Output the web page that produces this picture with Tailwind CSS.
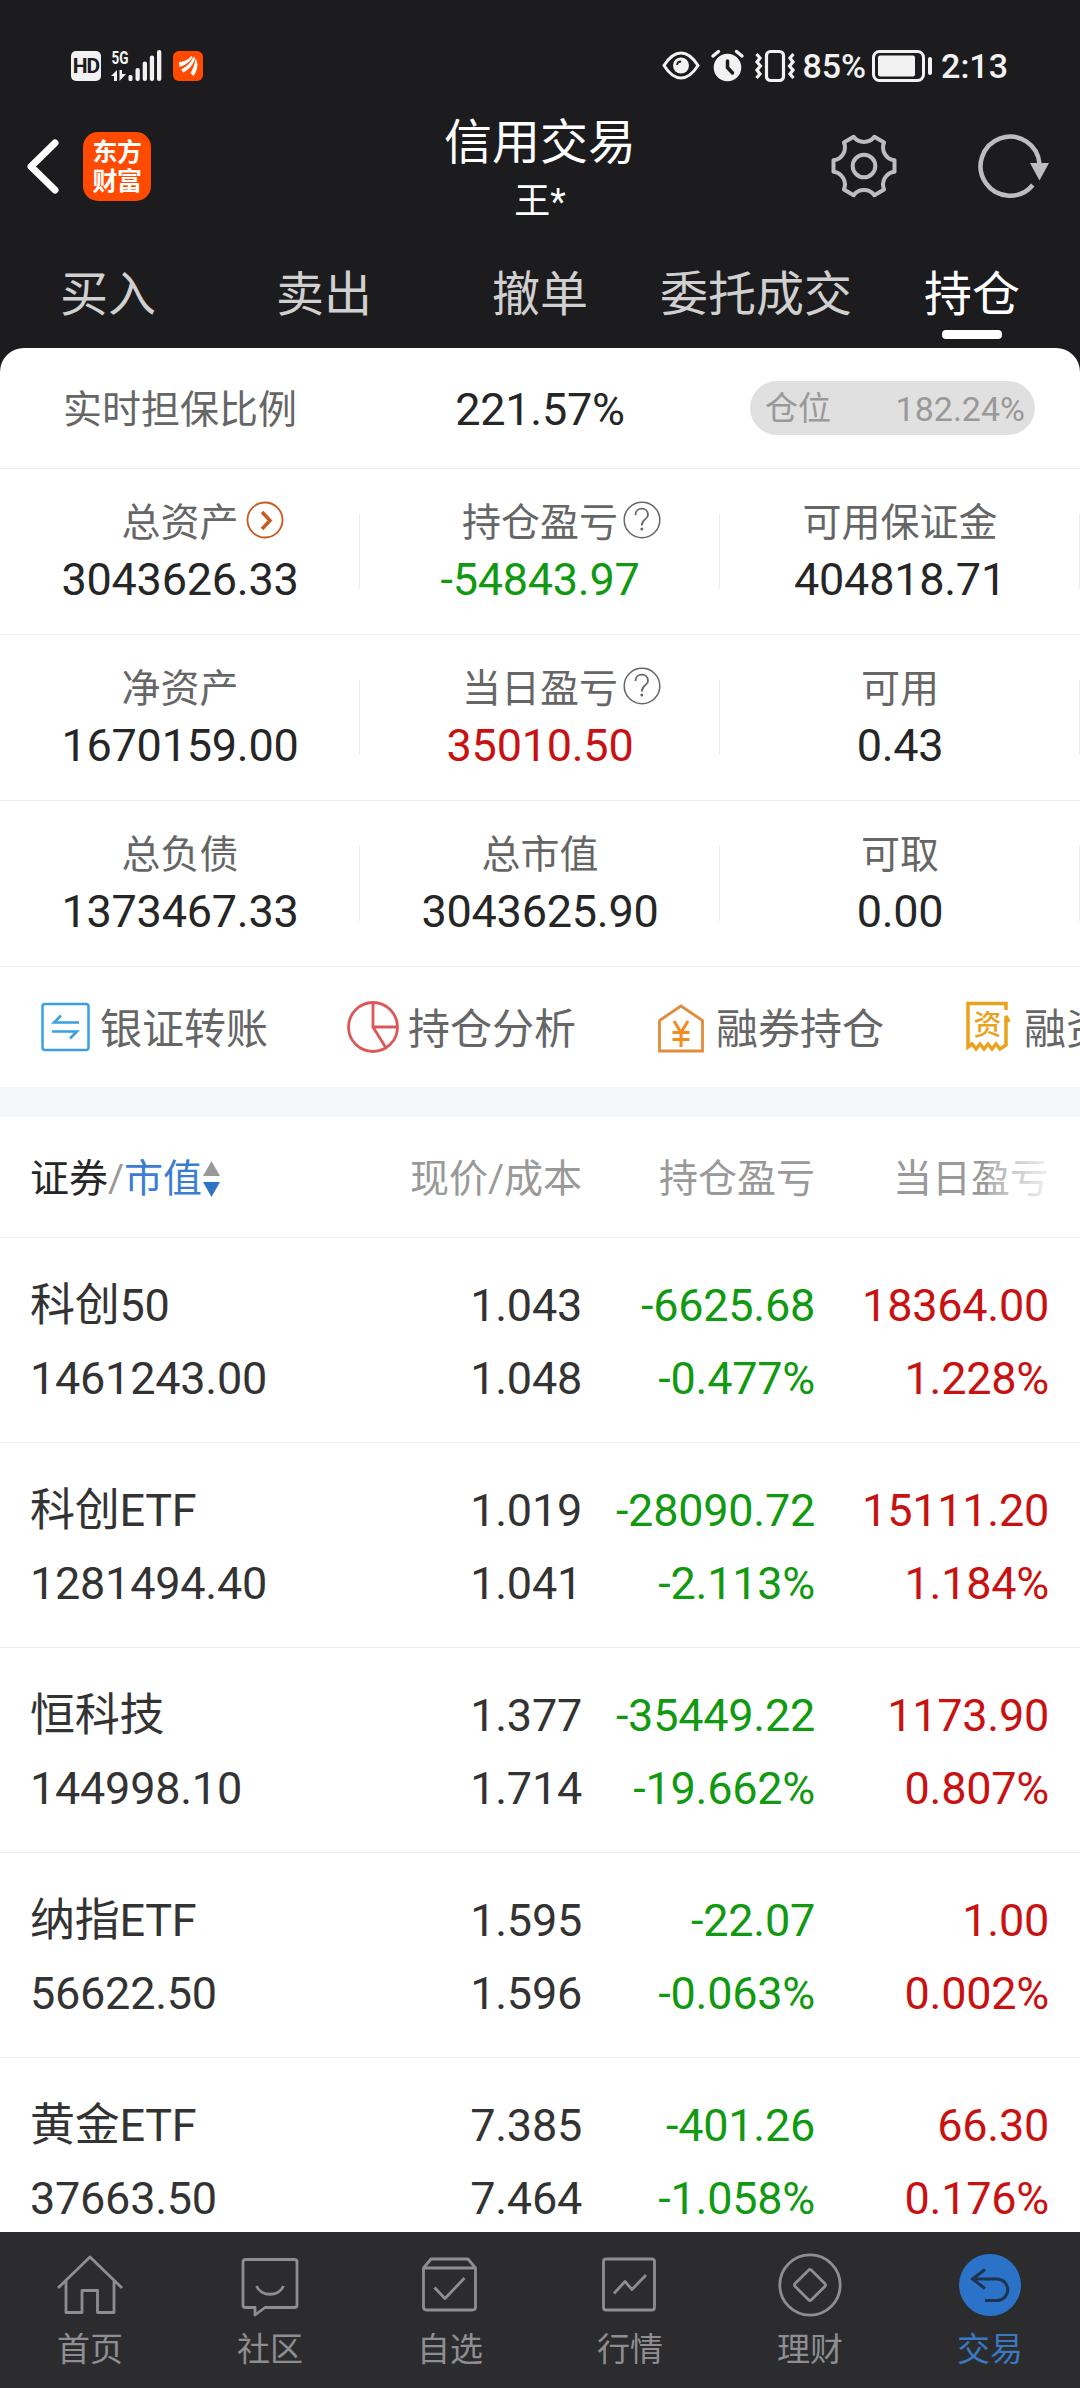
<!DOCTYPE html>
<html lang="zh-CN">
<head>
    <meta charset="UTF-8">
    <meta name="viewport" content="width=device-width, initial-scale=1.0">
    <title>信用交易</title>
    <script src="https://cdn.jsdelivr.net/npm/@tailwindcss/browser@4"></script>
</head>
<body class="bg-[#1c1c1e] font-[Roboto,'Noto_Sans_CJK_SC',sans-serif]">
    <div class="w-[1080px] h-[2388px] flex flex-col overflow-hidden">
        <!-- 状态栏 -->
        <div class="h-[100px] shrink-0 flex items-center justify-between pl-[71px] pr-[72px] pt-8 text-[#f2f2f2]">
            <div class="flex items-center">
                <div class="w-[30px] h-[30px] rounded-[5px] bg-[#f2f2f2] text-[#1c1c1e] text-[21px] leading-[30px] font-bold text-center tracking-[-1px]">HD</div>
                <svg class="ml-[10px] overflow-visible" width="52" height="34" viewBox="0 0 52 34" fill="currentColor">
                    <text x="0.5" y="15" font-size="19" font-weight="700" textLength="17" lengthAdjust="spacingAndGlyphs">5G</text>
                    <path d="M0 27L6 21V32H3V27ZM8.500 21H11V25H15L8.500 32Z" />
                    <rect x="17.500" y="26" width="4" height="6" rx="1.500" />
                    <rect x="24.500" y="19" width="4.300" height="13" rx="2" />
                    <rect x="31.700" y="12.500" width="4.300" height="19.500" rx="2" />
                    <rect x="38.800" y="6.500" width="4.300" height="25.500" rx="2" />
                    <rect x="46" y="1" width="4.300" height="31" rx="2" />
                </svg>
                <svg class="ml-[10px]" width="30" height="30" viewBox="0 0 30 30">
                    <rect width="30" height="30" rx="6" fill="#ff4a00" />
                    <path d="M6 11C10 11 15 9 18.500 5L19.500 6C17 11 12 14.500 6.500 16ZM8 18.500C13 16 18 12 20.500 5.500L22 7C21 13 16 18.500 10.500 21.500ZM17.500 22C20 18 22 13 22.500 7.500C25.500 12 25 19 20.500 25Z" fill="#fff" />
                </svg>
            </div>
            <div class="flex items-center">
                <svg width="134" height="34" viewBox="0 0 134 34" fill="none" stroke="currentColor">
                    <path d="M2 16.500C8 7 14 4 19 4S30 7 36 16.500C30 26 24 29 19 29S8 26 2 16.500Z" stroke-width="3" />
                    <circle cx="19" cy="16.500" r="8" fill="currentColor" stroke="none" />
                    <path d="M15 16A4 4 0 0 1 19 12.500" stroke="#1c1c1e" stroke-width="1.800" />
                    <circle cx="65.500" cy="18.500" r="13.800" fill="currentColor" stroke="none" />
                    <path d="M51 7L56.500 2.500M80 7L74.500 2.500" stroke-width="3.500" stroke-linecap="round" />
                    <path d="M65.500 12V18.500L70.500 24" stroke="#1c1c1e" stroke-width="3.500" stroke-linecap="round" />
                    <rect x="104.500" y="2.500" width="17" height="29" rx="4" stroke-width="3.200" />
                    <path d="M94.500 5L98 9L95 13L98.500 17L95 21L98 25L94.500 29M131.500 5L128 9L131 13L127.500 17L131 21L128 25L131.500 29" stroke-width="3.200" />
                </svg>
                <span class="ml-[6px] text-[34px] leading-[34px] font-medium">85%</span>
                <svg class="ml-[6px]" width="62" height="34" viewBox="0 0 62 34" fill="none" stroke="currentColor">
                    <rect x="1.500" y="2.500" width="50" height="29" rx="6" stroke-width="3" />
                    <rect x="6" y="6.500" width="37" height="21" rx="2" fill="currentColor" stroke="none" />
                    <path d="M58 10V24" stroke-width="4" stroke-linecap="round" />
                </svg>
                <span class="ml-[7px] text-[34px] leading-[34px] font-medium">2:13</span>
            </div>
        </div>

        <!-- 标题栏 -->
        <div class="h-[132px] shrink-0 grid grid-cols-3 items-center text-white">
            <div class="flex items-center pl-6">
                <svg width="36" height="60" viewBox="0 0 36 60" fill="none" stroke="#fff" stroke-width="7" stroke-linecap="round" stroke-linejoin="round">
                    <path d="M31 7L7 30.500L31 54" />
                </svg>
                <div class="ml-[23px] w-[68px] h-[69px] rounded-[15px] bg-[#ff4a00] text-[25px] leading-[29px] font-bold text-center pt-[6px] tracking-[-0.5px]">
                    <div>东方</div>
                    <div>财富</div>
                </div>
            </div>
            <div class="text-center pt-[11px]">
                <h1 class="text-[48px] leading-[60px]">信用交易</h1>
                <p class="text-[36px] leading-[58px]">王*</p>
            </div>
            <div class="flex items-center justify-end pr-[30px] gap-[77px]">
                <svg width="70" height="70" viewBox="-35 -35 70 70" fill="none" stroke="#bdbdbd" stroke-width="4" stroke-linejoin="round">
                    <path d="M30.500 -5.650V5.650A13 13 0 0 0 20.100 23.600L10.350 29.200A13 13 0 0 0 -10.350 29.200L-20.100 23.600A13 13 0 0 0 -30.500 5.650V-5.650A13 13 0 0 0 -20.100 -23.600L-10.350 -29.200A13 13 0 0 0 10.350 -29.200L20.100 -23.600A13 13 0 0 0 30.500 -5.650Z" />
                    <circle r="11.300" />
                </svg>
                <svg width="74" height="70" viewBox="-34 -35 74 70" fill="none" stroke="#bdbdbd" stroke-width="4.500">
                    <path d="M29.500 -2A29.500 29.500 0 1 0 22.800 19" />
                    <path d="M20 -3H39L29.500 14.500Z" fill="#bdbdbd" stroke="none" />
                </svg>
            </div>
        </div>

        <!-- 交易标签 -->
        <div class="h-[116px] shrink-0 grid grid-cols-5 text-[48px] leading-[60px] text-center text-[#d0d0d0] pt-[33px]">
            <div>买入</div>
            <div>卖出</div>
            <div>撤单</div>
            <div class="whitespace-nowrap">委托成交</div>
            <div class="text-white flex flex-col items-center">
                持仓
                <span class="mt-[5px] w-[60px] h-[9px] rounded bg-white"></span>
            </div>
        </div>

        <!-- 账户概览 -->
        <div class="flex-1 min-h-0 overflow-hidden bg-white rounded-t-[24px] text-[#262626]">
            <div class="h-[121px] border-b border-[#ececec] grid grid-cols-3 items-center">
                <div class="pl-[63px] pt-[4px] text-[39px] text-[#666]">实时担保比例</div>
                <div class="pt-[4px] text-[45px] tracking-[-0.25px] text-center">221.57%</div>
                <div class="ml-[30px] w-[285px] h-[54px] rounded-full bg-[#e0e0e0] text-[#999] text-[33px] flex items-center justify-between pl-[15px] pr-[10px] pt-[2px]">
                    <span>仓位</span>
                    <span class="text-[34px]">182.24%</span>
                </div>
            </div>

            <div class="h-[166px] border-b border-[#ececec] grid grid-cols-3 items-center text-center">
                <div class="h-[166px] pt-[26px] relative">
                    <div class="text-[39px] leading-[56px] text-[#666]">
                        <span class="relative">总资产
                            <svg class="absolute left-full top-[1px] ml-[7px]" width="38" height="38" viewBox="0 0 38 38" fill="none" stroke="#c8591f">
                                <circle cx="19" cy="19" r="17.500" stroke-width="1.800" />
                                <path d="M16 11L24 19.500L16 28" stroke-width="3.500" />
                            </svg>
                        </span>
                    </div>
                    <div class="text-[45px] leading-[58px] tracking-[-0.25px]">3043626.33</div>
                    <i class="absolute right-0 top-[45px] w-px h-[75px] bg-[#ececec]"></i>
                </div>
                <div class="h-[166px] pt-[26px] relative">
                    <div class="text-[39px] leading-[56px] text-[#666]">
                        <span class="relative">持仓盈亏
                            <svg class="absolute left-full top-[1px] ml-[5px]" width="38" height="38" viewBox="0 0 38 38" fill="none" stroke="#666">
                                <circle cx="19" cy="19" r="17.800" stroke-width="1.500" />
                                <path d="M12.500 14C12.500 5.500 25 5.500 25 14C25 18.500 18.800 18 18.800 24.500" stroke-width="1.800" />
                                <circle cx="18.800" cy="28" r="1.500" fill="#666" stroke="none" />
                            </svg>
                        </span>
                    </div>
                    <div class="text-[45px] leading-[58px] tracking-[-0.25px] text-[#119911]">-54843.97</div>
                    <i class="absolute right-0 top-[45px] w-px h-[75px] bg-[#ececec]"></i>
                </div>
                <div class="h-[166px] pt-[26px] relative">
                    <div class="text-[39px] leading-[56px] text-[#666]">可用保证金</div>
                    <div class="text-[45px] leading-[58px] tracking-[-0.25px]">404818.71</div>
                    <i class="absolute right-0 top-[45px] w-px h-[75px] bg-[#ececec]"></i>
                </div>
            </div>

            <div class="h-[166px] border-b border-[#ececec] grid grid-cols-3 items-center text-center">
                <div class="h-[166px] pt-[26px] relative">
                    <div class="text-[39px] leading-[56px] text-[#666]">净资产</div>
                    <div class="text-[45px] leading-[58px] tracking-[-0.25px]">1670159.00</div>
                    <i class="absolute right-0 top-[45px] w-px h-[75px] bg-[#ececec]"></i>
                </div>
                <div class="h-[166px] pt-[26px] relative">
                    <div class="text-[39px] leading-[56px] text-[#666]">
                        <span class="relative">当日盈亏
                            <svg class="absolute left-full top-[1px] ml-[5px]" width="38" height="38" viewBox="0 0 38 38" fill="none" stroke="#666">
                                <circle cx="19" cy="19" r="17.800" stroke-width="1.500" />
                                <path d="M12.500 14C12.500 5.500 25 5.500 25 14C25 18.500 18.800 18 18.800 24.500" stroke-width="1.800" />
                                <circle cx="18.800" cy="28" r="1.500" fill="#666" stroke="none" />
                            </svg>
                        </span>
                    </div>
                    <div class="text-[45px] leading-[58px] tracking-[-0.25px] text-[#c81212]">35010.50</div>
                    <i class="absolute right-0 top-[45px] w-px h-[75px] bg-[#ececec]"></i>
                </div>
                <div class="h-[166px] pt-[26px] relative">
                    <div class="text-[39px] leading-[56px] text-[#666]">可用</div>
                    <div class="text-[45px] leading-[58px] tracking-[-0.25px]">0.43</div>
                    <i class="absolute right-0 top-[45px] w-px h-[75px] bg-[#ececec]"></i>
                </div>
            </div>

            <div class="h-[166px] border-b border-[#ececec] grid grid-cols-3 items-center text-center">
                <div class="h-[166px] pt-[26px] relative">
                    <div class="text-[39px] leading-[56px] text-[#666]">总负债</div>
                    <div class="text-[45px] leading-[58px] tracking-[-0.25px]">1373467.33</div>
                    <i class="absolute right-0 top-[45px] w-px h-[75px] bg-[#ececec]"></i>
                </div>
                <div class="h-[166px] pt-[26px] relative">
                    <div class="text-[39px] leading-[56px] text-[#666]">总市值</div>
                    <div class="text-[45px] leading-[58px] tracking-[-0.25px]">3043625.90</div>
                    <i class="absolute right-0 top-[45px] w-px h-[75px] bg-[#ececec]"></i>
                </div>
                <div class="h-[166px] pt-[26px] relative">
                    <div class="text-[39px] leading-[56px] text-[#666]">可取</div>
                    <div class="text-[45px] leading-[58px] tracking-[-0.25px]">0.00</div>
                    <i class="absolute right-0 top-[45px] w-px h-[75px] bg-[#ececec]"></i>
                </div>
            </div>

            <!-- 快捷入口 -->
            <div class="h-[120px] flex items-center gap-[79px] pl-[39px] overflow-hidden whitespace-nowrap text-[42px] text-[#666]">
                <div class="shrink-0 flex items-center gap-[9px]">
                    <svg width="52" height="52" viewBox="0 0 52 52" fill="none" stroke="#3a9fe3" stroke-width="2.500">
                        <rect x="3.500" y="3" width="46" height="46" rx="2.500" />
                        <path d="M40 21.500H15L22 14.500M13 30.500H38L31 37.500" />
                    </svg>
                    <span class="pt-[4px]">银证转账</span>
                </div>
                <div class="shrink-0 flex items-center gap-[9px]">
                    <svg width="52" height="52" viewBox="0 0 52 52" fill="none" stroke="#dd5757" stroke-width="2.800">
                        <circle cx="26" cy="26" r="24.500" />
                        <path d="M26 1.500V26H50.500M26 26L39 47" />
                    </svg>
                    <span class="pt-[4px]">持仓分析</span>
                </div>
                <div class="shrink-0 flex items-center gap-[9px]">
                    <svg width="52" height="52" viewBox="0 0 52 52" fill="none" stroke="#e08c3c" stroke-width="2.800">
                        <path d="M4.500 50V19.500L26 5L47.500 19.500V50Z" />
                        <path d="M19 20L26 31.500L33 20M17.500 31.500H34.500M17.500 38.500H34.500M26 31V46" stroke="#f58a1f" stroke-width="3" />
                    </svg>
                    <span class="pt-[4px]">融券持仓</span>
                </div>
                <div class="shrink-0 flex items-center gap-[9px]">
                    <svg width="52" height="52" viewBox="0 0 52 52" fill="none" stroke="#e9a21b" stroke-width="3.500">
                        <path d="M43 9V2.500H5V46L9 43L13 48L17 43L21 48L25 43L29 48L33 43L37 48L43 44V15L46 21" />
                        <text x="10.500" y="34" font-size="28" font-weight="500" fill="#e9a21b" stroke="none">资</text>
                    </svg>
                    <span class="pt-[4px]">融资持仓</span>
                </div>
            </div>
            <div class="h-[30px] bg-[#f6f7fa]"></div>

            <!-- 持仓列表 -->
            <div class="h-[121px] border-b border-[#ececec] relative grid grid-cols-[300px_252px_233px_234px] items-center pl-[30px] pt-[4px] text-[39px] text-right text-[#999]">
                <div class="flex items-center">
                    <span class="text-[#262626]">证券</span>/<span class="text-[#3b7dd0]">市值</span>
                    <svg class="ml-px" width="17" height="36" viewBox="0 0 17 36">
                        <path d="M8.500 0L17 15H0Z" fill="#999" />
                        <path d="M8.500 36L0 21H17Z" fill="#2f73c4" />
                    </svg>
                </div>
                <div>现价/成本</div>
                <div>持仓盈亏</div>
                <div>当日盈亏</div>
                <div class="absolute right-0 top-0 w-[92px] h-[120px] bg-linear-to-r from-white/20 to-white to-80%"></div>
            </div>
            <div class="text-[45px] leading-[73px] tracking-[-0.25px] text-[#333] text-right">
                <div class="h-[205px] pt-[31px] pl-[30px] border-b border-[#ececec] grid grid-cols-[300px_252px_233px_234px] content-start">
                    <div class="text-left">科创50</div>
                    <div>1.043</div>
                    <div class="text-[#119911]">-6625.68</div>
                    <div class="text-[#c81212]">18364.00</div>
                    <div class="text-left">1461243.00</div>
                    <div>1.048</div>
                    <div class="text-[#119911]">-0.477%</div>
                    <div class="text-[#c81212]">1.228%</div>
                </div>
                <div class="h-[205px] pt-[31px] pl-[30px] border-b border-[#ececec] grid grid-cols-[300px_252px_233px_234px] content-start">
                    <div class="text-left">科创ETF</div>
                    <div>1.019</div>
                    <div class="text-[#119911]">-28090.72</div>
                    <div class="text-[#c81212]">15111.20</div>
                    <div class="text-left">1281494.40</div>
                    <div>1.041</div>
                    <div class="text-[#119911]">-2.113%</div>
                    <div class="text-[#c81212]">1.184%</div>
                </div>
                <div class="h-[205px] pt-[31px] pl-[30px] border-b border-[#ececec] grid grid-cols-[300px_252px_233px_234px] content-start">
                    <div class="text-left">恒科技</div>
                    <div>1.377</div>
                    <div class="text-[#119911]">-35449.22</div>
                    <div class="text-[#c81212]">1173.90</div>
                    <div class="text-left">144998.10</div>
                    <div>1.714</div>
                    <div class="text-[#119911]">-19.662%</div>
                    <div class="text-[#c81212]">0.807%</div>
                </div>
                <div class="h-[205px] pt-[31px] pl-[30px] border-b border-[#ececec] grid grid-cols-[300px_252px_233px_234px] content-start">
                    <div class="text-left">纳指ETF</div>
                    <div>1.595</div>
                    <div class="text-[#119911]">-22.07</div>
                    <div class="text-[#c81212]">1.00</div>
                    <div class="text-left">56622.50</div>
                    <div>1.596</div>
                    <div class="text-[#119911]">-0.063%</div>
                    <div class="text-[#c81212]">0.002%</div>
                </div>
                <div class="h-[205px] pt-[31px] pl-[30px] grid grid-cols-[300px_252px_233px_234px] content-start">
                    <div class="text-left">黄金ETF</div>
                    <div>7.385</div>
                    <div class="text-[#119911]">-401.26</div>
                    <div class="text-[#c81212]">66.30</div>
                    <div class="text-left">37663.50</div>
                    <div>7.464</div>
                    <div class="text-[#119911]">-1.058%</div>
                    <div class="text-[#c81212]">0.176%</div>
                </div>
            </div>
        </div>

        <!-- 底部导航 -->
        <div class="h-[156px] shrink-0 bg-[#2c2c2e] grid grid-cols-6 pt-[17px] text-[33px] leading-[58px] text-center text-[#8e8e92]">
            <div class="flex flex-col items-center">
                <svg width="72" height="72" viewBox="-36 -36 72 72" fill="none" stroke="currentColor" stroke-width="2.800" stroke-linejoin="round">
                    <path d="M-32 3L0 -28L32 3M-24 -5V27.500H-8V5.500H7.500V27.500H24V-5" />
                </svg>
                首页
            </div>
            <div class="flex flex-col items-center">
                <svg width="72" height="72" viewBox="-36 -36 72 72" fill="none" stroke="currentColor" stroke-width="2.800" stroke-linejoin="round">
                    <path d="M-24.500 -25.500H24.500Q27 -25.500 27 -23V20Q27 22.500 24.500 22.500H-5L-15 30V22.500H-24.500Q-27 22.500 -27 20V-23Q-27 -25.500 -24.500 -25.500Z" />
                    <path d="M-13.500 1C-9 12 9 12 13.500 1" />
                </svg>
                社区
            </div>
            <div class="flex flex-col items-center">
                <svg width="72" height="72" viewBox="-36 -36 72 72" fill="none" stroke="currentColor" stroke-width="2.800" stroke-linejoin="round">
                    <path d="M-26.500 -17L-19 -26H18L25.500 -17V22Q25.500 25 22.500 25H-23.500Q-26.500 25 -26.500 22ZM-26.500 -17H25.500M-15.500 2.500L-5 13.500L14.500 -7" />
                </svg>
                自选
            </div>
            <div class="flex flex-col items-center">
                <svg width="72" height="72" viewBox="-36 -36 72 72" fill="none" stroke="currentColor" stroke-width="2.800" stroke-linejoin="round">
                    <rect x="-26.500" y="-26" width="51" height="51" rx="2.500" />
                    <path d="M-16 8.500L-5 -3.500L2 4.500L16 -10" />
                </svg>
                行情
            </div>
            <div class="flex flex-col items-center">
                <svg width="72" height="72" viewBox="-36 -36 72 72" fill="none" stroke="currentColor" stroke-width="2.800" stroke-linejoin="round">
                    <circle r="30.200" />
                    <rect x="-11.500" y="-11.500" width="23" height="23" rx="2" transform="rotate(45)" />
                </svg>
                理财
            </div>
            <div class="flex flex-col items-center text-[#3a78c0]">
                <svg width="72" height="72" viewBox="-36 -36 72 72" fill="none" stroke="#1e3350" stroke-width="3">
                    <circle r="31" fill="#2b73c8" stroke="none" />
                    <path d="M-5 -15.500L-17.500 -6L-5 3.500M-17.500 -6H7A10.700 10.700 0 0 1 7 15.500H-5" />
                </svg>
                交易
            </div>
        </div>
    </div>
</body>
</html>
